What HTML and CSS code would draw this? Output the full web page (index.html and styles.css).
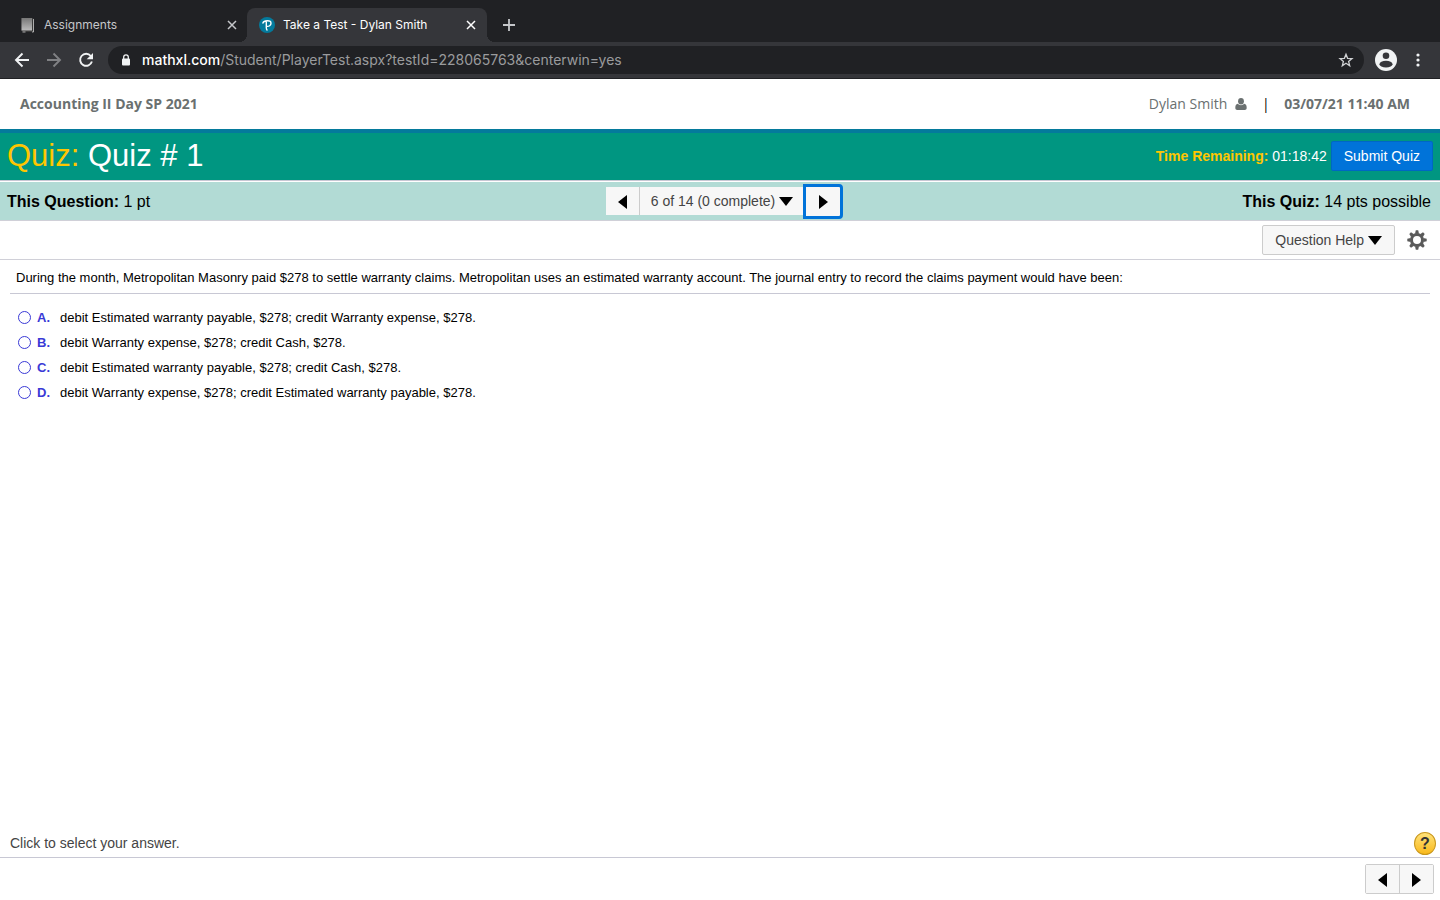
FILE: index.html
```
<!DOCTYPE html>
<html lang="en">

<head>
    <meta charset="UTF-8">
    <meta name="viewport" content="width=device-width, initial-scale=1.0">
    <title>Take a Test - Dylan Smith</title>
    <link rel="stylesheet" href="styles.css">
</head>

<body>
    <div class="browser">
        <div class="tabs">
            <div class="tab">
                <svg class="favicon" width="16" height="16" viewBox="0 0 16 16">
                    <defs>
                        <linearGradient id="book" x1="0" y1="0" x2="0" y2="1">
                            <stop offset="0" stop-color="#777" />
                            <stop offset="1" stop-color="#bbb" />
                        </linearGradient>
                    </defs>
                    <path d="M1.500 1h11.500l1 1.500V15H3l-1.500-1z" fill="#3a3a3a" />
                    <path d="M1.500 1h10.500v12.500H1.500z" fill="url(#book)" />
                    <path d="M2.500 15h3M12 15h1.500V2" fill="none" stroke="#ccc" stroke-width=".8" />
                </svg>
                <span class="tab-title">Assignments</span>
                <button class="icon-btn" aria-label="Close tab">
                    <svg width="16" height="16" viewBox="0 0 16 16"><path d="M4 4l8 8M12 4l-8 8" stroke="#c5c7ca" stroke-width="1.5" /></svg>
                </button>
            </div>
            <div class="tab active">
                <svg class="favicon" width="16" height="16" viewBox="0 0 16 16">
                    <circle cx="8" cy="8" r="8" fill="#047a9c" />
                    <path d="M3.900 6C4.800 3.300 12 2.500 12 6.200c0 2.400-2.300 3.300-4 3.200M7.300 5v5.500c0 1.200.2 1.900.7 2.400" fill="none" stroke="#fff" stroke-width="1.400" stroke-linecap="round" />
                </svg>
                <span class="tab-title">Take a Test - Dylan Smith</span>
                <button class="icon-btn" aria-label="Close tab">
                    <svg width="16" height="16" viewBox="0 0 16 16"><path d="M4 4l8 8M12 4l-8 8" stroke="#fff" stroke-width="1.5" /></svg>
                </button>
            </div>
            <button class="icon-btn new-tab" aria-label="New tab">
                <svg width="16" height="16" viewBox="0 0 16 16"><path d="M8 2v12M2 8h12" stroke="#c5c7ca" stroke-width="1.8" /></svg>
            </button>
        </div>
        <div class="toolbar">
            <button class="icon-btn" aria-label="Back">
                <svg width="16" height="16" viewBox="0 0 16 16"><path d="M15 8H2M8.500 1.500L2 8l6.500 6.500" fill="none" stroke="#f1f3f4" stroke-width="1.900" /></svg>
            </button>
            <button class="icon-btn" aria-label="Forward">
                <svg width="16" height="16" viewBox="0 0 16 16"><path d="M1 8h13M7.500 1.500L14 8l-6.500 6.500" fill="none" stroke="#808184" stroke-width="1.900" /></svg>
            </button>
            <button class="icon-btn" aria-label="Reload">
                <svg width="16" height="16" viewBox="0 0 16 16">
                    <path d="M12.800 4A6 6 0 1 0 13.900 9.500" fill="none" stroke="#f1f3f4" stroke-width="1.900" />
                    <path d="M15 1v6.300H8.700z" fill="#f1f3f4" />
                </svg>
            </button>
            <div class="address">
                <svg width="10" height="13" viewBox="0 0 10 13">
                    <rect x="1" y="4.500" width="8" height="7" rx="1" fill="#f1f3f4" />
                    <path d="M2.700 5V3.100a2.300 2.300 0 0 1 4.600 0V5" fill="none" stroke="#f1f3f4" stroke-width="1.300" />
                </svg>
                <span class="url"><b>mathxl.com</b>/Student/PlayerTest.aspx?testId=228065763&amp;centerwin=yes</span>
                <button class="icon-btn" aria-label="Bookmark this page">
                    <svg width="16" height="16" viewBox="0 0 16 16"><path d="M8 2.200l1.600 4.100 4.400.3-3.400 2.800 1.100 4.300L8 11.300l-3.700 2.400 1.100-4.300L2 6.600l4.400-.3z" fill="none" stroke="#d0d2d4" stroke-width="1.300" /></svg>
                </button>
            </div>
            <div class="actions">
                <button class="icon-btn" aria-label="Profile">
                    <svg width="22" height="22" viewBox="0 0 22 22">
                        <circle cx="11" cy="11" r="11" fill="#f1f3f4" />
                        <circle cx="11" cy="6.800" r="3.300" fill="#35363a" />
                        <ellipse cx="11" cy="15.200" rx="6.500" ry="3.400" fill="#35363a" />
                    </svg>
                </button>
                <button class="icon-btn" aria-label="Menu">
                    <svg width="16" height="16" viewBox="0 0 16 16" fill="#f1f3f4"><circle cx="8" cy="3" r="1.600" /><circle cx="8" cy="8" r="1.600" /><circle cx="8" cy="13" r="1.600" /></svg>
                </button>
            </div>
        </div>
    </div>

    <header class="course">
        <span class="course-name">Accounting II Day SP 2021</span>
        <div class="user">
            <span>Dylan Smith</span>
            <svg width="12" height="12" viewBox="0 0 12 12" fill="#6a7070">
                <ellipse cx="6" cy="3.300" rx="2.900" ry="3.300" />
                <path d="M2.700 5.700C1 6 .3 7.500.3 10c0 1.300.8 2 2 2h7.400c1.200 0 2-.7 2-2 0-2.500-.7-4-2.400-4.300C7.600 7.600 4.400 7.600 2.700 5.700z" />
            </svg>
            <span class="divider">|</span>
            <span class="date">03/07/21 11:40 AM</span>
        </div>
    </header>

    <div class="quiz-bar">
        <h1><span class="yellow">Quiz:</span> Quiz # 1</h1>
        <div class="timer">
            <span><b class="yellow">Time Remaining:</b> 01:18:42</span>
            <button class="submit">Submit Quiz</button>
        </div>
    </div>

    <div class="question-bar">
        <div class="question-points"><b>This Question:</b> 1 pt</div>
        <div class="pager">
            <button class="nav" aria-label="Previous question">
                <svg width="9" height="14" viewBox="0 0 9 14"><path d="M9 0v14L0 7z" /></svg>
            </button>
            <button class="jump">6 of 14 (0 complete)
                <svg width="14" height="9" viewBox="0 0 14 9"><path d="M0 0h14L7 9z" /></svg>
            </button>
            <button class="nav focused" aria-label="Next question">
                <svg width="9" height="14" viewBox="0 0 9 14"><path d="M0 0v14l9-7z" /></svg>
            </button>
        </div>
        <div class="quiz-points"><b>This Quiz:</b> 14 pts possible</div>
    </div>

    <div class="tools">
        <button class="help-menu">Question Help
            <svg width="14" height="9" viewBox="0 0 14 9"><path d="M0 0h14L7 9z" /></svg>
        </button>
        <button class="icon-btn" aria-label="Settings">
            <svg width="20" height="20" viewBox="-10 -10 20 20">
                <circle r="5.500" fill="none" stroke="#5a5a5a" stroke-width="3" />
                <g fill="#5a5a5a">
                    <path id="tooth" d="M-2-6.300l.8-3.400h2.400l.8 3.400z" />
                    <use href="#tooth" transform="rotate(45)" />
                    <use href="#tooth" transform="rotate(90)" />
                    <use href="#tooth" transform="rotate(135)" />
                    <use href="#tooth" transform="rotate(180)" />
                    <use href="#tooth" transform="rotate(225)" />
                    <use href="#tooth" transform="rotate(270)" />
                    <use href="#tooth" transform="rotate(315)" />
                </g>
            </svg>
        </button>
    </div>

    <main>
        <p class="question">During the month, Metropolitan Masonry paid $278 to settle warranty claims. Metropolitan uses an estimated warranty account. The journal entry to record the claims payment would have been:</p>
        <form class="answers">
            <label><input type="radio" name="answer" value="A"><b>A.</b><span>debit Estimated warranty payable, $278; credit Warranty expense, $278.</span></label>
            <label><input type="radio" name="answer" value="B"><b>B.</b><span>debit Warranty expense, $278; credit Cash, $278.</span></label>
            <label><input type="radio" name="answer" value="C"><b>C.</b><span>debit Estimated warranty payable, $278; credit Cash, $278.</span></label>
            <label><input type="radio" name="answer" value="D"><b>D.</b><span>debit Warranty expense, $278; credit Estimated warranty payable, $278.</span></label>
        </form>
    </main>

    <div class="hint">
        <span>Click to select your answer.</span>
        <button class="help" aria-label="Help">?</button>
    </div>
    <footer>
        <div class="pager bordered">
            <button class="nav" aria-label="Previous question">
                <svg width="9" height="14" viewBox="0 0 9 14"><path d="M9 0v14L0 7z" /></svg>
            </button>
            <button class="nav" aria-label="Next question">
                <svg width="9" height="14" viewBox="0 0 9 14"><path d="M0 0v14l9-7z" /></svg>
            </button>
        </div>
    </footer>
</body>

</html>
```

FILE: styles.css
```
* {
    margin: 0;
    padding: 0;
    box-sizing: border-box;
}

body {
    display: flex;
    flex-direction: column;
    min-height: 100vh;
    background-color: #fff;
    color: #000;
    font-family: "Liberation Sans", Arial, sans-serif;
    font-size: 14px;
}

button {
    border: none;
    background: none;
    font: inherit;
    cursor: pointer;
}

svg {
    flex: none;
}

.icon-btn {
    display: flex;
}

/* browser window */
.browser {
    background-color: #202124;
    font-family: Inter, sans-serif;
}

.tabs {
    display: flex;
    align-items: center;
    height: 42px;
    padding: 8px 7px 0;
}

.tab {
    display: flex;
    align-items: center;
    gap: 8px;
    width: 240px;
    height: 34px;
    padding: 0 7px 0 13px;
    color: #c5c7ca;
    font-size: 12px;
}

.tab-title {
    flex: 1;
    padding-bottom: 1px;
}

.tab.active {
    position: relative;
    padding: 0 8px 0 12px;
    border-radius: 8px 8px 0 0;
    background-color: #35363a;
    color: #fff;
}

.tab.active::before,
.tab.active::after {
    content: "";
    position: absolute;
    bottom: 0;
    width: 8px;
    height: 8px;
}

.tab.active::before {
    left: -8px;
    background: radial-gradient(circle at 0 0, transparent 8px, #35363a 8px);
}

.tab.active::after {
    right: -8px;
    background: radial-gradient(circle at 100% 0, transparent 8px, #35363a 8px);
}

.new-tab {
    margin-left: 14px;
}

.toolbar {
    display: flex;
    align-items: center;
    gap: 16px;
    height: 37px;
    padding: 0 14px;
    border-bottom: 1px solid #202124;
    background-color: #35363a;
}

.address {
    display: flex;
    flex: 1;
    align-items: center;
    gap: 11px;
    height: 28px;
    margin: 0 -5px 0 -2px;
    padding: 0 10px 0 13px;
    border-radius: 14px;
    background-color: #202124;
    color: #9a9b9d;
}

.url {
    flex: 1;
    padding-bottom: 1px;
}

.url b {
    color: #fff;
    font-weight: 500;
}

.actions {
    display: flex;
    align-items: center;
    gap: 13px;
}

/* course header */
.course {
    display: flex;
    align-items: center;
    justify-content: space-between;
    height: 54px;
    padding: 0 30px 1px 20px;
    border-bottom: 4px solid #047a9c;
    color: #6a7070;
    font-family: "Open Sans", sans-serif;
}

.course-name,
.date {
    font-weight: 700;
}

.user {
    display: flex;
    align-items: center;
    gap: 8px;
}

.divider {
    width: 21px;
    color: #000;
    text-align: center;
}

/* quiz */
.quiz-bar {
    display: flex;
    align-items: center;
    justify-content: space-between;
    height: 48px;
    padding: 0 7px 2px;
    border-bottom: 1px solid #c8c8d4;
    background-color: #009681;
    color: #fff;
}

.quiz-bar h1 {
    font-size: 31px;
    font-weight: 400;
}

.yellow {
    color: #ffc600;
}

.timer {
    display: flex;
    align-items: center;
    gap: 4px;
}

.submit {
    height: 30px;
    padding: 0 12px;
    border: 1px solid #0067c4;
    border-radius: 2px;
    background-color: #0073d9;
    color: #fff;
}

.question-bar {
    display: grid;
    grid-template-columns: 1fr auto 1fr;
    align-items: center;
    height: 39px;
    margin-top: 1px;
    padding: 0 9px 0 7px;
    border-bottom: 1px solid #d0d0d8;
    background-color: #b2dbd5;
    font-size: 16px;
}

.question-points,
.quiz-points {
    padding-top: 2px;
}

.quiz-points {
    text-align: right;
}

.pager {
    display: flex;
    align-items: center;
    font-size: 14px;
}

.question-bar .pager {
    padding-left: 11px;
}

.pager button {
    display: flex;
    align-items: center;
    justify-content: center;
    gap: 4px;
    height: 28px;
    background-color: #f7f7f7;
    color: #444;
}

.pager button svg {
    margin-top: 1px;
}

.pager .nav {
    width: 33px;
}

.pager .jump {
    padding: 0 11px;
    border-left: 1px solid #ccc;
}

.pager .focused {
    width: 40px;
    height: 35px;
    margin-left: -1px;
    border: 3px solid #0073d9;
    border-radius: 0 4px 4px 0;
}

.pager.bordered {
    border: 1px solid #ccc;
    border-radius: 2px;
}

.bordered .nav + .nav {
    width: 34px;
    border-left: 1px solid #ccc;
}

.tools {
    display: flex;
    align-items: center;
    justify-content: flex-end;
    gap: 12px;
    height: 39px;
    padding: 0 13px 0 0;
    border-bottom: 1px solid #d0d0d8;
}

.help-menu {
    display: flex;
    align-items: center;
    gap: 4px;
    height: 30px;
    padding: 0 12px;
    border: 1px solid #ccc;
    border-radius: 2px;
    background-color: #f7f7f7;
    color: #444;
}

main {
    flex: 1;
    padding: 0 10px;
    font-size: 13px;
}

.question {
    padding: 10px 6px 7px;
    border-bottom: 1px solid #c8c8d4;
    line-height: 16px;
}

.answers {
    display: flex;
    flex-direction: column;
    padding: 11px 8px;
}

.answers label {
    display: flex;
    align-items: center;
    height: 25px;
}

.answers input {
    appearance: none;
    width: 13px;
    height: 13px;
    border: 1px solid #3a3ad6;
    border-radius: 50%;
}

.answers input:checked {
    background: radial-gradient(#3a3ad6 3px, transparent 4px);
}

.answers b {
    width: 23px;
    margin-left: 6px;
    color: #3a3ad6;
}

.hint {
    display: flex;
    align-items: center;
    justify-content: space-between;
    padding: 0 4px 2px 10px;
    border-bottom: 1px solid #c8c8d4;
    color: #444;
}

.hint span {
    padding-bottom: 1px;
}

.help {
    width: 22px;
    height: 23px;
    border: 1px solid #c9971c;
    border-radius: 50%;
    background: linear-gradient(#ffe27a, #f9b91c);
    color: #333;
    font-size: 16px;
    font-weight: 700;
    line-height: 20px;
}

footer {
    display: flex;
    justify-content: flex-end;
    padding: 6px 6px;
}
```
